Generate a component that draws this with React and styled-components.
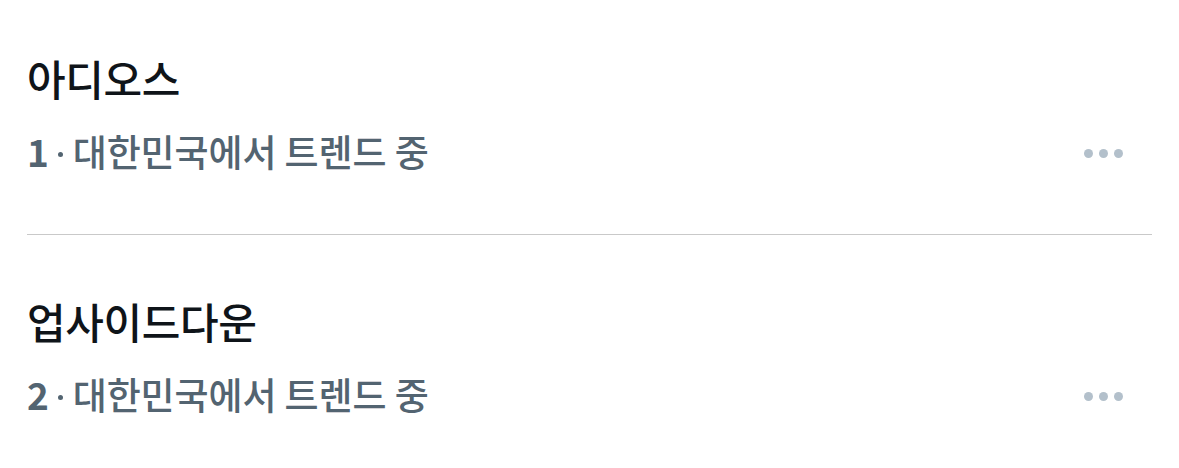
import React from "react";
import styled, { createGlobalStyle } from "styled-components";

const GlobalStyle = createGlobalStyle`
  body {
    margin: 0;
    background: #ffffff;
    font-family: "Noto Sans CJK KR", "Noto Sans", sans-serif;
  }
`;

const TrendList = styled.div`
  display: flex;
  flex-direction: column;
  width: 1179px;
  height: 468px;
  padding: 0 27px;
  box-sizing: border-box;
  background: #fff;
`;

const TrendItem = styled.div`
  display: flex;
  align-items: flex-end;
  justify-content: space-between;
  padding: ${(p) => (p.first ? "54px" : "62px")} 0 61px;
  border-bottom: ${(p) => (p.last ? "none" : "1px solid #c9c9c9")};
`;

const TrendText = styled.div`
  display: flex;
  flex-direction: column;
  gap: 27px;
`;

const TrendTitle = styled.div`
  font-size: 42px;
  line-height: 48px;
  font-weight: 500;
  letter-spacing: -0.4px;
  color: #0f1419;
`;

const TrendMeta = styled.div`
  display: flex;
  align-items: center;
  font-size: 37px;
  line-height: 44px;
  font-weight: 500;
  letter-spacing: -0.1px;
  color: #536471;
`;

const Rank = styled.span`
  font-weight: 700;
`;

const Dot = styled.span`
  width: 5px;
  height: 5px;
  margin: 6px 10px 0 9px;
  border-radius: 50%;
  background: #536471;
`;

const MoreButton = styled.div`
  display: flex;
  gap: 6px;
  margin: 0 29px 15px 0;
`;

const MoreDot = styled.span`
  width: 9px;
  height: 9px;
  border-radius: 50%;
  background: #b3c0cb;
`;

const trends = [
  { rank: 1, title: "아디오스" },
  { rank: 2, title: "업사이드다운" },
];

export default function App() {
  return (
    <>
      <GlobalStyle />
      <TrendList>
        {trends.map((t, i) => (
          <TrendItem key={t.rank} first={i === 0} last={i === trends.length - 1}>
            <TrendText>
              <TrendTitle>{t.title}</TrendTitle>
              <TrendMeta>
                <Rank>{t.rank}</Rank>
                <Dot />
                <span>대한민국에서 트렌드 중</span>
              </TrendMeta>
            </TrendText>
            <MoreButton>
              <MoreDot />
              <MoreDot />
              <MoreDot />
            </MoreButton>
          </TrendItem>
        ))}
      </TrendList>
    </>
  );
}
